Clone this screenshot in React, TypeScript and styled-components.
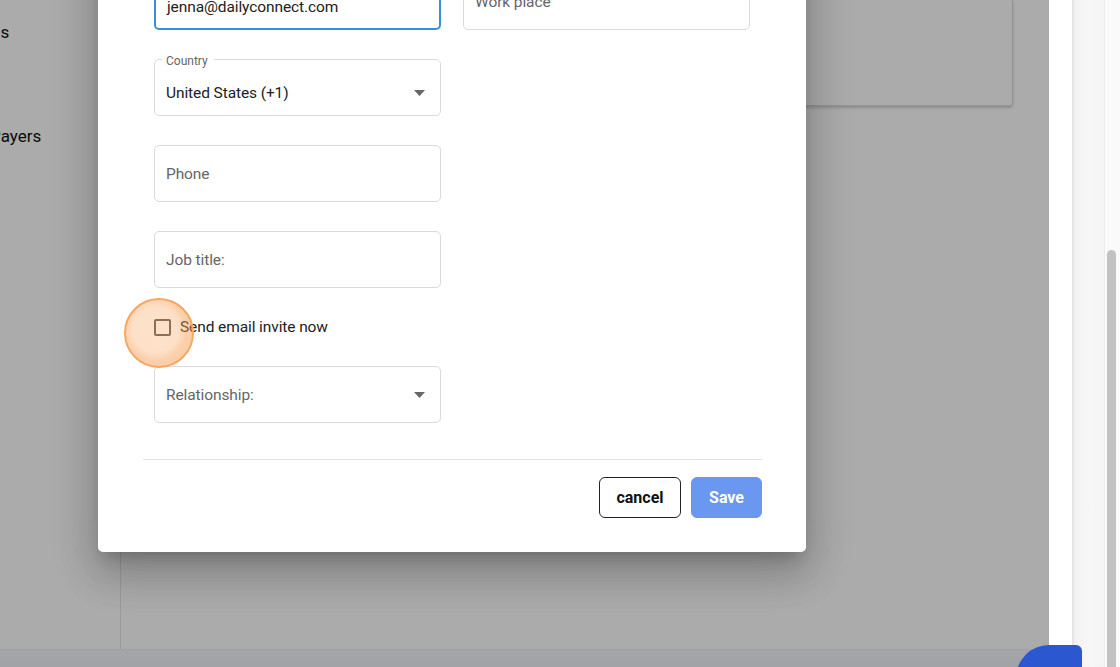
import React from "react";
import styled, { createGlobalStyle } from "styled-components";

const GlobalStyle = createGlobalStyle`
  html, body {
    margin: 0;
    padding: 0;
    height: 100%;
    overflow: hidden;
  }
  body {
    font-family: Roboto, "Noto Sans", "Liberation Sans", sans-serif;
    color: #222;
  }
  * {
    box-sizing: border-box;
  }
`;

export default function App() {
  return (
    <>
      <GlobalStyle />
      <StyledScreen>
        <StyledAppArea>
          <StyledAppBody>
            <StyledSidebar>
              <StyledSideItem $shift={-24}>Kids</StyledSideItem>
              <StyledSideItem $shift={-10}>Payers</StyledSideItem>
            </StyledSidebar>
            <StyledMain>
              <StyledCard />
            </StyledMain>
          </StyledAppBody>
          <StyledFooter />
        </StyledAppArea>
        <StyledRightStrip />
        <StyledGutter />
        <StyledScrollbar>
          <StyledThumb />
        </StyledScrollbar>

        <StyledOverlay />

        <StyledModal>
          <StyledForm>
            <StyledRow>
              <Field label="Email" value="jenna@dailyconnect.com" focused />
              <Field placeholder="Work place" />
            </StyledRow>
            <Field label="Country" value="United States (+1)" select />
            <Field placeholder="Phone" />
            <Field placeholder="Job title:" />
            <StyledCheckRow>
              <StyledCheckbox />
              <span>Send email invite now</span>
            </StyledCheckRow>
            <Field placeholder="Relationship:" select />
          </StyledForm>
          <StyledDivider />
          <StyledActions>
            <StyledButton $width={82}>cancel</StyledButton>
            <StyledButton $width={71} $primary>
              Save
            </StyledButton>
          </StyledActions>
        </StyledModal>

        <StyledHighlight />
        <StyledFab />
      </StyledScreen>
    </>
  );
}

type FieldProps = {
  label?: string;
  value?: string;
  placeholder?: string;
  focused?: boolean;
  select?: boolean;
};

function Field({ label, value, placeholder, focused, select }: FieldProps) {
  return (
    <StyledField $focused={focused} $labelled={!!label}>
      {label && <StyledLegend>{label}</StyledLegend>}
      {value ? (
        <StyledValue>{value}</StyledValue>
      ) : (
        <StyledPlaceholder>{placeholder}</StyledPlaceholder>
      )}
      {select && (
        <svg width="11" height="6" viewBox="0 0 11 6">
          <path d="M0 0 L11 0 L5.5 6 Z" fill="#666" />
        </svg>
      )}
    </StyledField>
  );
}

const StyledScreen = styled.div`
  position: relative;
  width: 100vw;
  height: 100vh;
  display: flex;
  overflow: hidden;
  background: #fff;
`;

const StyledAppArea = styled.div`
  flex: 0 0 1049px;
  display: flex;
  flex-direction: column;
  background: #fff;
`;

const StyledAppBody = styled.div`
  flex: 1;
  display: flex;
  min-height: 0;
`;

const StyledSidebar = styled.nav`
  width: 121px;
  border-right: 1px solid #e6e6e6;
  padding-top: 22px;
  display: flex;
  flex-direction: column;
  gap: 84px;
  overflow: hidden;
`;

const StyledSideItem = styled.div<{ $shift: number }>`
  margin-left: ${(p) => p.$shift}px;
  font-size: 17px;
  line-height: 20px;
  color: #111;
  white-space: nowrap;
`;

const StyledMain = styled.main`
  flex: 1;
  padding: 0 36px 0 30px;
`;

const StyledCard = styled.div`
  height: 106px;
  border: 1px solid #dcdcdc;
  border-top: none;
  border-radius: 0 0 4px 4px;
  box-shadow: 0 2px 3px rgba(0, 0, 0, 0.18);
  background: #fff;
`;

const StyledFooter = styled.footer`
  height: 18px;
  background: #f1f4f9;
  border-top: 1px solid #eceff4;
  box-shadow: inset 0 10px 0 #f5f7fb;
`;

const StyledRightStrip = styled.div`
  width: 23px;
  background: #fff;
`;

const StyledGutter = styled.div`
  width: 33px;
  background: linear-gradient(90deg, #e2e2e2 0%, #f3f3f3 12%, #f7f7f7 60%, #f4f4f4 100%);
  border-right: 1px solid #ececec;
`;

const StyledScrollbar = styled.div`
  flex: 1;
  background: #fafafa;
  padding: 250px 4px 0 2px;
`;

const StyledThumb = styled.div`
  height: 100%;
  border-radius: 5px 5px 0 0;
  background: #c2c2c2;
`;

const StyledOverlay = styled.div`
  position: absolute;
  left: 0;
  top: 0;
  width: 1049px;
  height: 100%;
  background: rgba(0, 0, 0, 0.33);
`;

const StyledModal = styled.div`
  position: absolute;
  left: 98px;
  bottom: 115px;
  width: 708px;
  padding: 40px 44px 34px 45px;
  background: #fff;
  border-radius: 5px;
  box-shadow: 0 11px 15px -7px rgba(0, 0, 0, 0.2),
    0 24px 38px 3px rgba(0, 0, 0, 0.14), 0 9px 46px 8px rgba(0, 0, 0, 0.12);
`;

const StyledForm = styled.div`
  display: flex;
  flex-direction: column;
  gap: 29px;
  padding-left: 11px;
`;

const StyledRow = styled.div`
  display: grid;
  grid-template-columns: 287px 288px;
  gap: 22px;
  align-items: end;
`;

const StyledField = styled.div<{ $focused?: boolean; $labelled?: boolean }>`
  position: relative;
  width: 287px;
  height: 57px;
  display: flex;
  align-items: center;
  justify-content: space-between;
  padding: ${(p) => (p.$labelled ? "10px 15px 0 11px" : "0 15px 0 11px")};
  border: ${(p) => (p.$focused ? "2px solid #3a8ede" : "1px solid #dadada")};
  border-radius: 5px;
  background: #fff;
  font-size: 15.5px;
  letter-spacing: -0.1px;
`;

const StyledLegend = styled.span`
  position: absolute;
  top: -6px;
  left: 7px;
  padding: 0 6px 0 4px;
  background: #fff;
  font-size: 12px;
  line-height: 14px;
  letter-spacing: 0;
  color: #666;
`;

const StyledValue = styled.span`
  color: #222;
`;

const StyledPlaceholder = styled.span`
  color: #666;
`;

const StyledCheckRow = styled.label`
  display: flex;
  align-items: center;
  gap: 9px;
  height: 20px;
  font-size: 15.5px;
  letter-spacing: -0.1px;
  color: #222;
`;

const StyledCheckbox = styled.span`
  width: 17px;
  height: 17px;
  border: 2px solid #5a5a5a;
  border-radius: 2px;
  background: #fff;
`;

const StyledDivider = styled.hr`
  margin: 36px 0 17px;
  border: none;
  border-top: 1px solid #e2e2e2;
`;

const StyledActions = styled.div`
  display: flex;
  justify-content: flex-end;
  gap: 10px;
`;

const StyledButton = styled.button<{ $primary?: boolean; $width: number }>`
  width: ${(p) => p.$width}px;
  height: 41px;
  padding: 0;
  border-radius: 6px;
  border: 1px solid ${(p) => (p.$primary ? "#6a97ef" : "#222")};
  background: ${(p) => (p.$primary ? "#6a97ef" : "#fff")};
  color: ${(p) => (p.$primary ? "#fff" : "#111")};
  font-family: Roboto, "Liberation Sans", sans-serif;
  font-weight: 700;
  font-size: 16px;
`;

const StyledHighlight = styled.div`
  position: absolute;
  left: 124px;
  top: 298px;
  width: 70px;
  height: 70px;
  border-radius: 50%;
  border: 2px solid #f5a862;
  background: radial-gradient(
    circle at 45% 45%,
    rgba(248, 158, 80, 0.3) 0%,
    rgba(248, 158, 80, 0.32) 45%,
    rgba(246, 150, 70, 0.45) 60%,
    rgba(246, 150, 70, 0.5) 100%
  );
`;

const StyledFab = styled.div`
  position: absolute;
  left: 1016px;
  top: 645px;
  width: 66px;
  height: 66px;
  border-radius: 50% 6px 50% 50%;
  background: #2b58d0;
`;
